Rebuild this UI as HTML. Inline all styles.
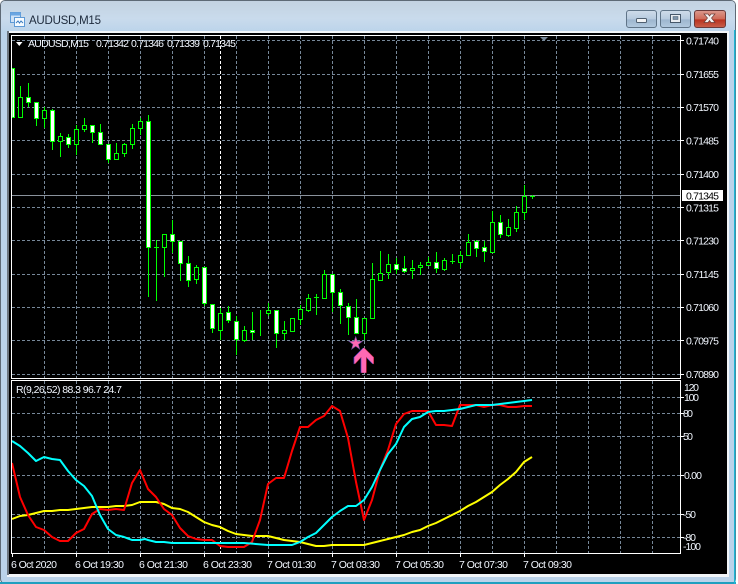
<!DOCTYPE html>
<html><head><meta charset="utf-8"><style>
html,body{margin:0;padding:0;width:738px;height:584px;overflow:hidden;background:#fff}
svg{display:block}
text{font-family:"Liberation Sans",sans-serif;font-size:10.5px;fill:#f2f7ff}
</style></head><body>
<svg width="738" height="584" viewBox="0 0 738 584" xmlns="http://www.w3.org/2000/svg">
<defs>
<linearGradient id="tb" x1="0" y1="0" x2="0" y2="1"><stop offset="0" stop-color="#c3d2e1"/><stop offset=".55" stop-color="#c9dbec"/><stop offset="1" stop-color="#bad3ea"/></linearGradient>
<linearGradient id="btn" x1="0" y1="0" x2="0" y2="1"><stop offset="0" stop-color="#cfdcea"/><stop offset=".5" stop-color="#b7cbdf"/><stop offset=".55" stop-color="#9db6cf"/><stop offset="1" stop-color="#b3cadf"/></linearGradient>
<linearGradient id="cl" x1="0" y1="0" x2="0" y2="1"><stop offset="0" stop-color="#dc9a8e"/><stop offset=".5" stop-color="#cf6a58"/><stop offset=".55" stop-color="#b8321f"/><stop offset="1" stop-color="#c9604c"/></linearGradient>
</defs>
<!-- window frame -->
<rect x="0" y="0" width="736" height="584" rx="5" fill="#5e6a76"/>
<rect x="1" y="1" width="734" height="582" rx="4" fill="#bbd3ea"/>
<rect x="1" y="1" width="734" height="32" rx="4" fill="url(#tb)"/>
<rect x="0" y="582" width="736" height="2" fill="#1f9fbf"/>
<rect x="734" y="30" width="1.5" height="554" fill="#1fb5d5"/>
<rect x="7" y="31" width="722" height="546" fill="#f2f5f8"/>
<rect x="7" y="31" width="2" height="544" fill="#6d7680"/>
<rect x="9" y="33" width="718" height="541" fill="#000"/>
<!-- icon -->
<rect x="10.500" y="12.500" width="10" height="10" fill="#cfe2f6" stroke="#5e9ad6"/>
<rect x="10.500" y="12.500" width="10" height="3" fill="#6aa6e2"/>
<rect x="14.500" y="17.500" width="10" height="9" fill="#f6fbff" stroke="#5e9ad6"/>
<path d="M16 23l2-2 1.500 2 1.500-2 2 2" fill="none" stroke="#3c7cc0"/>
<!-- title -->
<text x="29" y="24" style="font-size:11.500px;fill:#1d2a3c" textLength="72">AUDUSD,M15</text>
<!-- buttons -->
<rect x="626.500" y="10.500" width="30" height="17" rx="2.500" fill="url(#btn)" stroke="#5f7488"/>
<rect x="660.500" y="10.500" width="30" height="17" rx="2.500" fill="url(#btn)" stroke="#5f7488"/>
<rect x="694.500" y="10.500" width="31" height="17" rx="2.500" fill="url(#cl)" stroke="#6b3a3a"/>
<rect x="636.500" y="18.500" width="10" height="4" rx="1" fill="#f2f4f6" stroke="#4f5f70"/>
<rect x="670.500" y="14.500" width="10" height="8" fill="#e9edf2" stroke="#46586a"/>
<rect x="673" y="16.500" width="5" height="3" fill="#7d94aa" stroke="#46586a" stroke-width=".5"/>
<path d="M704 14h4l1.500 2 1.500-2h4l-3.500 4 3.500 4.500h-4l-1.500-2-1.500 2h-4l3.500-4.500z" fill="#f4f4f4" stroke="#6e3d38" stroke-width=".7"/>

<!-- grid -->
<g shape-rendering="crispEdges" fill="none" stroke="#778899" stroke-dasharray="3 2">
<path d="M12 40.500H680M12 74.500H680M12 107.500H680M12 140.500H680M12 174.500H680M12 207.500H680M12 240.500H680M12 274.500H680M12 307.500H680M12 340.500H680M12 374.500H680"/>
<path d="M12 397.500H680M12 413.500H680M12 436.500H680M12 475.500H680M12 514.500H680M12 537.500H680"/>
<path d="M44.500 36V378M76.500 36V378M108.500 36V378M140.500 36V378M172.500 36V378M204.500 36V378M236.500 36V378M268.500 36V378M300.500 36V378M332.500 36V378M364.500 36V378M396.500 36V378M428.500 36V378M460.500 36V378M492.500 36V378M524.500 36V378M556.500 36V378M588.500 36V378M620.500 36V378M652.500 36V378"/>
<path d="M44.500 381V553M76.500 381V553M108.500 381V553M140.500 381V553M172.500 381V553M204.500 381V553M236.500 381V553M268.500 381V553M300.500 381V553M332.500 381V553M364.500 381V553M396.500 381V553M428.500 381V553M460.500 381V553M492.500 381V553M524.500 381V553M556.500 381V553M588.500 381V553M620.500 381V553M652.500 381V553"/>
<path stroke="#fff" d="M220.500 36V378M220.500 381V553"/>
</g>
<!-- price line -->
<rect x="12" y="195" width="668" height="1" fill="#8a929c"/>

<!-- wicks -->
<g shape-rendering="crispEdges">
<path fill="none" stroke="#00ff00" d="M20.500 86V118M28.500 83V107M36.500 102V126M44.500 107V128M52.500 109V150M60.500 133V157M68.500 134V148M76.500 125V155M84.500 118V132M92.500 125V143M100.500 124V145M108.500 144V163M116.500 143V160M124.500 143V157M132.500 124V149M140.500 118V135M148.500 115V297M156.500 240V301M164.500 234V277M172.500 220V253M180.500 241V281M188.500 256V287M196.500 265V284M204.500 267V306M212.500 304V333M220.500 308V340M228.500 306V323M236.500 316V355M244.500 326V342M252.500 312V340M260.500 310V336M268.500 303V316M276.500 310V348M284.500 321V340M292.500 318V331M300.500 305V325M308.500 294V312M316.500 294V315M324.500 270V299M332.500 274V312M340.500 289V324M348.500 303V335M356.500 299V334M364.500 318V340M372.500 263V318M380.500 251V280M388.500 254V279M396.500 258V274M404.500 256V273M412.500 260V279M420.500 262V275M428.500 257V266M436.500 252V273M444.500 258V271M452.500 254V264M460.500 251V268M468.500 234V255M476.500 240V257M484.500 241V262M492.500 211V253M500.500 215V238M508.500 219V237M516.500 206V232M524.500 185V220M532.500 195V199"/>
<!-- doji -->
<path fill="none" stroke="#00ff00" d="M154 247.500H159M314 297.500H319M450 261.500H455M530 196.500H535"/>
<!-- hollow -->
<path fill="#000" stroke="#00ff00" d="M18.500 97.500h4v20h-4zM42.500 110.500h4v8h-4zM58.500 136.500h4v5h-4zM74.500 129.500h4v15h-4zM82.500 125.500h4v4h-4zM114.500 153.500h4v6h-4zM122.500 144.500h4v9h-4zM130.500 128.500h4v16h-4zM138.500 121.500h4v7h-4zM162.500 234.500h4v13h-4zM194.500 267.500h4v12h-4zM218.500 313.500h4v17h-4zM242.500 330.500h4v10h-4zM266.500 310.500h4v3h-4zM282.500 330.500h4v3h-4zM290.500 318.500h4v13h-4zM298.500 309.500h4v10h-4zM306.500 298.500h4v12h-4zM322.500 274.500h4v24h-4zM362.500 318.500h4v15h-4zM370.500 279.500h4v39h-4zM378.500 273.500h4v7h-4zM386.500 264.500h4v8h-4zM410.500 268.500h4v2h-4zM418.500 265.500h4v2h-4zM426.500 262.500h4v3h-4zM442.500 260.500h4v9h-4zM458.500 255.500h4v7h-4zM466.500 242.500h4v13h-4zM490.500 222.500h4v30h-4zM506.500 227.500h4v8h-4zM514.500 212.500h4v16h-4zM522.500 196.500h4v16h-4z"/>
<!-- filled -->
<path fill="#fff" stroke="#00ff00" d="M12 68.500h2.500v49h-2.500zM26.500 97.500h4v5h-4zM34.500 102.500h4v16h-4zM50.500 110.500h4v31h-4zM66.500 137.500h4v7h-4zM90.500 125.500h4v7h-4zM98.500 132.500h4v12h-4zM106.500 144.500h4v15h-4zM146.500 121.500h4v126h-4zM170.500 234.500h4v7h-4zM178.500 241.500h4v22h-4zM186.500 263.500h4v17h-4zM202.500 267.500h4v36h-4zM210.500 304.500h4v24h-4zM226.500 312.500h4v8h-4zM234.500 321.500h4v18h-4zM250.500 330.500h4v2h-4zM274.500 310.500h4v23h-4zM330.500 274.500h4v18h-4zM338.500 292.500h4v13h-4zM346.500 306.500h4v11h-4zM354.500 317.500h4v16h-4zM394.500 264.500h4v5h-4zM402.500 268.500h4v3h-4zM434.500 262.500h4v6h-4zM474.500 241.500h4v7h-4zM482.500 247.500h4v4h-4zM498.500 222.500h4v12h-4z"/>
</g>

<!-- star and arrow -->
<polygon points="355.700,336.500 357.300,341.200 362.400,341.300 358.400,344.400 359.800,349.200 355.700,346.300 351.600,349.200 353,344.400 349,341.300 354.100,341.200" fill="#ff69b4" stroke="#6a4a9a" stroke-width=".6"/>
<g>
<polygon transform="translate(-.7 0)" points="363.700,347.700 373.300,357.300 373.300,364.300 366,356.700 366,372.700 361.300,372.700 361.300,356.700 354.300,364.300 354.300,357.300" fill="#3c3cc8"/>
<polygon transform="translate(.7 0)" points="363.700,347.700 373.300,357.300 373.300,364.300 366,356.700 366,372.700 361.300,372.700 361.300,356.700 354.300,364.300 354.300,357.300" fill="#c8283c"/>
<polygon points="363.700,347.700 373.300,357.300 373.300,364.300 366,356.700 366,372.700 361.300,372.700 361.300,356.700 354.300,364.300 354.300,357.300" fill="#ff69b4"/>
</g>

<!-- indicator lines -->
<g fill="none" stroke-width="2" stroke-linejoin="round">
<polyline stroke="#ffff00" points="12,519 20,516 28,515 36,513 44,511 52,511 60,510 68,510 76,509 84,508 92,507 100,507 108,507 116,506 124,506 132,505 140,502 148,502 156,502 164,504 172,508 180,509 188,512 196,517 204,522 212,525 220,527 228,531 236,534 244,535 252,536 260,536 268,536 276,538 284,540 292,541 300,542 308,544 316,546 324,546 332,545 340,545 348,545 356,545 364,545 372,543 380,541 388,539 396,537 404,535 412,532 420,530 428,526 436,523 444,519 452,515 460,511 468,506 476,502 484,497 492,492 500,485 508,479 516,472 524,462 532,457"/>
<polyline stroke="#ff0000" points="12,463 20,497 28,515 36,527 44,530 52,537 60,541 68,541 76,533 84,529 92,514 100,509 108,510 116,509 124,510 132,483 140,470 148,489 156,497 164,509 172,515 180,528 188,536 196,539 204,540 212,540 220,546 228,547 236,547 244,547 252,542 260,520 268,484 276,478 284,478 292,451 300,427 308,427 316,420 324,416 332,406 340,411 348,438 356,482 364,520 372,500 380,470 388,450 396,424 404,414 412,411 420,411 428,411 436,425 444,425 452,426 460,405 468,405 476,405 484,407 492,405 500,405 508,407 516,407 524,406 532,406"/>
<polyline stroke="#00ffff" points="12,441 20,446 28,453 36,461 44,457 52,459 60,460 68,471 76,480 84,486 92,496 100,515 108,529 116,535 124,537 132,540 140,540 145,539 148,540 156,542 164,542 172,543 204,543 244,543 268,545 292,545 300,542 308,537 316,533 324,525 332,517 340,511 348,506 356,506 364,500 372,487 380,470 388,454 396,444 404,427 412,419 420,417 428,412 436,411 444,411 452,410 460,409 468,407 476,405 484,405 492,405 500,404 508,403 516,402 524,401 532,400"/>
</g>

<!-- frames -->
<g shape-rendering="crispEdges" fill="none" stroke="#fff">
<path d="M11.500 35.500H680.500V378.500H11.500Z"/>
<path d="M11.500 380.500H680.500V553.500H11.500Z"/>
<path d="M681 40.500h3M681 74.500h3M681 107.500h3M681 140.500h3M681 174.500h3M681 207.500h3M681 240.500h3M681 274.500h3M681 307.500h3M681 340.500h3M681 374.500h3M681 397.500h3M681 413.500h3M681 436.500h3M681 475.500h3M681 514.500h3M681 537.500h3"/>
<path d="M12.500 553v4M76.500 553v4M140.500 553v4M204.500 553v4M268.500 553v4M332.500 553v4M396.500 553v4M460.500 553v4M524.500 553v4"/>
</g>
<polygon points="16,42 22.500,42 19.250,46" fill="#fff"/>
<polygon points="540,37 548,37 544,41" fill="#778899"/>

<!-- header text -->
<text x="28" y="47" textLength="61">AUDUSD,M15</text>
<text x="96" y="47" textLength="33">0.71342</text>
<text x="131" y="47" textLength="33">0.71346</text>
<text x="167" y="47" textLength="33">0.71339</text>
<text x="203" y="47" textLength="33">0.71345</text>
<text x="16" y="393" textLength="106">R(9,26,52) 88.3 96.7 24.7</text>

<!-- price labels -->
<text x="686" y="44.500" textLength="33">0.71740</text>
<text x="686" y="78" textLength="33">0.71655</text>
<text x="686" y="111" textLength="33">0.71570</text>
<text x="686" y="144.500" textLength="33">0.71485</text>
<text x="686" y="178" textLength="33">0.71400</text>
<text x="686" y="211.500" textLength="33">0.71315</text>
<text x="686" y="244.500" textLength="33">0.71230</text>
<text x="686" y="278" textLength="33">0.71145</text>
<text x="686" y="311" textLength="33">0.71060</text>
<text x="686" y="344.500" textLength="33">0.70975</text>
<text x="686" y="378" textLength="33">0.70890</text>
<rect x="682" y="190" width="41" height="11" fill="#fff"/>
<text x="686" y="199.500" style="fill:#000" textLength="33">0.71345</text>

<!-- indicator labels -->
<text x="684" y="391" textLength="15">120</text>
<text x="684" y="401" textLength="15">100</text>
<text x="683" y="417" textLength="10">80</text>
<text x="683" y="440" textLength="10">50</text>
<text x="684" y="479" textLength="18">0.00</text>
<text x="683" y="518" textLength="13">-50</text>
<text x="683" y="541" textLength="13">-80</text>
<text x="683" y="550" textLength="18">-100</text>

<!-- time labels -->
<text x="11" y="568" textLength="46">6 Oct 2020</text>
<text x="75" y="568" textLength="49">6 Oct 19:30</text>
<text x="139" y="568" textLength="49">6 Oct 21:30</text>
<text x="203" y="568" textLength="49">6 Oct 23:30</text>
<text x="267" y="568" textLength="49">7 Oct 01:30</text>
<text x="331" y="568" textLength="49">7 Oct 03:30</text>
<text x="395" y="568" textLength="49">7 Oct 05:30</text>
<text x="459" y="568" textLength="49">7 Oct 07:30</text>
<text x="523" y="568" textLength="49">7 Oct 09:30</text>
</svg>
</body></html>
